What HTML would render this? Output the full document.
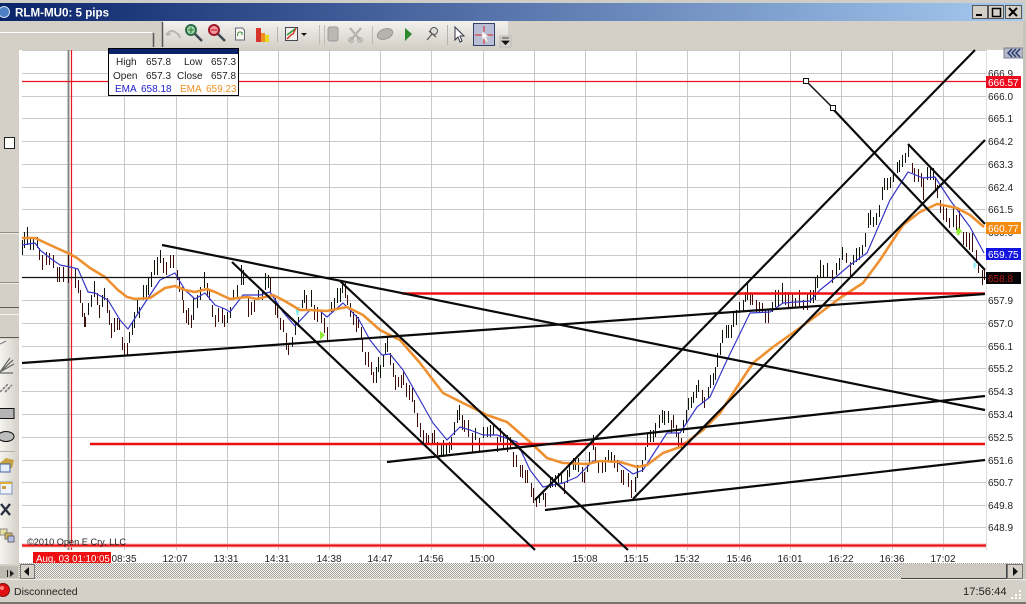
<!DOCTYPE html>
<html><head><meta charset="utf-8"><title>RLM-MU0: 5 pips</title>
<style>
html,body{margin:0;padding:0;background:#d4d0c8;width:1026px;height:604px;overflow:hidden}
svg{display:block;font-family:"Liberation Sans",sans-serif}
.g{stroke:#c9c9c9;stroke-width:1;fill:none}
.u{stroke:#0c140a;stroke-width:1;fill:none;shape-rendering:crispEdges}
.d{stroke:#3c0c08;stroke-width:1;fill:none;shape-rendering:crispEdges}
.t{stroke:#0a0a0a;stroke-width:2.2;fill:none}
.r{stroke:#ee1010;stroke-width:2.5;fill:none}
.a{font-size:10px;fill:#222}
.x{font-size:10px;fill:#222;text-anchor:middle}
.i{font-size:10px;fill:#222}
</style></head><body>
<svg width="1026" height="604" viewBox="0 0 1026 604">
<defs>
<linearGradient id="tb" x1="0" x2="1" y1="0" y2="0"><stop offset="0" stop-color="#0a246a"/><stop offset="1" stop-color="#a6caf0"/></linearGradient>
<linearGradient id="lp" x1="0" x2="1" y1="0" y2="0"><stop offset="0" stop-color="#f4f3ee"/><stop offset="1" stop-color="#d4d0c8"/></linearGradient>
<linearGradient id="tg" x1="0" x2="0" y1="0" y2="1"><stop offset="0" stop-color="#f3f2ee"/><stop offset="1" stop-color="#d4d0c8"/></linearGradient>
<pattern id="ht" width="2" height="2" patternUnits="userSpaceOnUse"><rect width="2" height="2" fill="#f4f4f0"/><rect width="1" height="1" fill="#a5a29b"/><rect x="1" y="1" width="1" height="1" fill="#a5a29b"/></pattern>
</defs>
<rect width="1026" height="604" fill="#d4d0c8"/>
<rect y="0" width="1026" height="3" fill="#cfcdc8"/>
<rect y="3" width="1026" height="18" fill="url(#tb)"/>
<circle cx="4" cy="12" r="5.5" fill="#4d7fc4" stroke="#cfe0f5"/>
<text x="15" y="16.5" font-size="11.6" font-weight="bold" fill="#fff">RLM-MU0: 5 pips</text>
<!-- window buttons -->
<g fill="#d4d0c8" stroke="#555" stroke-width="1">
<rect x="972.5" y="5.5" width="15" height="13"/><rect x="988.5" y="5.5" width="15" height="13"/><rect x="1005.5" y="5.5" width="16" height="13"/></g>
<path d="M976 15h6" stroke="#000" stroke-width="2"/>
<rect x="992.5" y="8.5" width="8" height="8" fill="none" stroke="#000" stroke-width="1.5"/>
<path d="M1009 8l8 8M1017 8l-8 8" stroke="#000" stroke-width="2"/>
<!-- toolbar -->
<rect y="21" width="1026" height="29" fill="#d4d0c8"/>
<rect x="163" y="21" width="345" height="27" fill="url(#tg)"/>
<path d="M0 32.5H152" stroke="#fff"/>
<path d="M153.5 33V47" stroke="#555" stroke-width="1.5"/>
<path d="M162.5 22V47" stroke="#555" stroke-width="1.5"/>
<!-- icons -->
<path d="M166 35q4-6 9-3t5 6M166 35l5-1" stroke="#b9b7b0" stroke-width="2" fill="none"/>
<circle cx="191" cy="30" r="5" fill="#9fd6a8" stroke="#2f6c4a" stroke-width="2"/><path d="M188 30h6M191 27v6" stroke="#2b7a3c"/><path d="M195 34l7 7" stroke="#3f4a52" stroke-width="2.6"/>
<circle cx="214" cy="30" r="5" fill="#f09aa0" stroke="#a01828" stroke-width="2"/><path d="M211 30h6" stroke="#c01020"/><path d="M218 34l7 7" stroke="#3f4a52" stroke-width="2.6"/>
<path d="M235.500 28h7l2 2v10h-9z" fill="#f6f6f0" stroke="#667"/><path d="M238 36a2.500 2.500 0 0 1 4-3M242 32v3" stroke="#3a8a3a" fill="none"/>
<rect x="256" y="28" width="5" height="14" fill="#d8352a"/><rect x="261" y="33" width="4" height="9" fill="#f09020"/><rect x="265" y="35" width="4" height="7" fill="#e8d820"/>
<path d="M277.500 27V42" stroke="#b5b2aa"/>
<rect x="285.500" y="27.500" width="12" height="13" fill="#f0f0ea" stroke="#445"/><path d="M287 39l4-4 2-1 3-6" stroke="#d8352a" stroke-width="1.500" fill="none"/><path d="M287 35l4-3 4-3" stroke="#2f9a3a" stroke-width="1.500" fill="none"/>
<path d="M301 33h6l-3 3z" fill="#111"/>
<path d="M319.500 25V45M324.500 25V45" stroke="#c0bdb5"/>
<rect x="328" y="27" width="10" height="14" rx="2" fill="#bbb8b2" stroke="#999"/>
<path d="M350 28l11 13M361 28l-11 13" stroke="#b5b2ac" stroke-width="2.200"/><circle cx="351" cy="40" r="2.500" fill="none" stroke="#aaa"/><circle cx="360" cy="40" r="2.500" fill="none" stroke="#aaa"/>
<path d="M372.500 26V44" stroke="#bdbab2"/>
<ellipse cx="385" cy="34" rx="8" ry="5" transform="rotate(-20 385 34)" fill="#b5b3ad" stroke="#999"/>
<path d="M405 28l7 6-7 7z" fill="#2c8a2c"/>
<circle cx="434" cy="31" r="3.500" fill="#ddd" stroke="#555"/><path d="M432 34l-5 6M429 31l7 6" stroke="#555" stroke-width="1.200"/>
<path d="M447.500 25V45" stroke="#b5b2aa"/>
<path d="M455 27l0 13 3-3 2 5 2-1-2-5 4 0z" fill="#fff" stroke="#334"/>
<rect x="473.500" y="23.500" width="21" height="22" fill="#b9bdd6" stroke="#33406a"/>
<path d="M484 26v7M484 38v6M475 35h7M487 35h6" stroke="#e02020"/><path d="M482 31l0 9 2-2 2 4 2-1-2-4h3z" fill="#fff" stroke="#ccc"/>
<rect x="500" y="36" width="11" height="11" fill="#d4d0c8" stroke="#bbb"/><path d="M502 38h7M502 41h7l-3.500 3.500z" fill="#111" stroke="#111" stroke-width=".8"/>

<!-- left panel -->
<rect x="0" y="50" width="19" height="528" fill="#d4d0c8"/>
<path d="M0 233.500H19M0 283.500H19" stroke="#eeece6"/><path d="M0 232.500H19M0 282.500H19" stroke="#8e8c85"/>
<path d="M0 307.500H19M0 337.500H19" stroke="#5f5d58"/><path d="M0 314.500H19" stroke="#f4f3ee"/>
<rect x="0" y="339" width="19" height="225" fill="url(#lp)"/>
<rect x="4.500" y="137.500" width="10" height="11" fill="#fff" stroke="#222"/>
<path d="M0 344l6-3" stroke="#777"/>
<path d="M0 372L13 360M0 372L10 358M0 372L14 364M0 373H13" stroke="#666" stroke-width="1.200"/>
<path d="M0 392l8-8M5 392l7-7" stroke="#777" stroke-width="1.500" stroke-dasharray="3 1"/>
<rect x="-2" y="408.500" width="16" height="10" fill="#b4b4b4" stroke="#111"/>
<ellipse cx="6" cy="436.500" rx="8" ry="5" fill="#bdbdbd" stroke="#111"/>
<path d="M0 451.500H15" stroke="#b5b2aa"/>
<path d="M0 463l6-5 8 2-2 8H0z" fill="#c8a040"/><rect x="0" y="464" width="10" height="8" fill="#e6eefa" stroke="#4060a0"/>
<rect x="0" y="482" width="12" height="12" fill="#eef3fb" stroke="#7a95bd"/><rect x="0" y="482" width="12" height="2" fill="#e0b030"/><rect x="2" y="486" width="4" height="3" fill="#d0a040"/>
<path d="M1 504l9 11M10 504l-9 11" stroke="#2a3040" stroke-width="2.300"/>
<rect x="0" y="529" width="7" height="6" fill="#e8e0a0" stroke="#888"/><rect x="5" y="533" width="7" height="6" fill="#d0b050" stroke="#776"/><rect x="8" y="536" width="6" height="6" fill="#b8c0e0" stroke="#667"/>
<rect x="0" y="566" width="18" height="12" fill="#bdbab2"/><path d="M7.500 570v7" stroke="#222"/><path d="M10 570l4 3.500-4 3.500z" fill="#222"/>

<!-- chart -->
<rect x="19" y="50" width="1004" height="513" fill="#fff"/>
<path class="g" d="M124.500 50V550M176.500 50V550M227.500 50V550M278.500 50V550M329.500 50V550M380.500 50V550M431.500 50V550M483.500 50V550M534.500 50V550M585.500 50V550M636.500 50V550M687.500 50V550M739.500 50V550M790.500 50V550M841.500 50V550M892.500 50V550M943.500 50V550"/>
<path class="g" d="M22 50.500H986M22 73.500H986M22 96.500H986M22 118.500H986M22 141.500H986M22 164.500H986M22 187.500H986M22 209.500H986M22 232.500H986M22 255.500H986M22 277.500H986M22 300.500H986M22 323.500H986M22 346.500H986M22 368.500H986M22 391.500H986M22 414.500H986M22 437.500H986M22 460.500H986M22 482.500H986M22 505.500H986M22 527.500H986"/>
<path d="M986.500 50V550" stroke="#ddd"/>
<path d="M68.500 50V550" stroke="#8b8880" stroke-width="2"/>

<!-- bars -->
<g transform="translate(.5 0)">
<path class="u" d="M22 240V255M24 232V248M27 227V245M30 237V250M33 237V250M37 237V248"/>
<path class="d" d="M39 248V260M42 255V270M46 252V265M49 253V265M53 255V268M57 267V282M59 267V282M63 267V282M68 255V283M71 263V280M75 268V288M78 280V293M80 290V303M82 303V317M84 313V327M85 317V327"/>
<path class="u" d="M88 303V315M91 295V307M94 281V297"/>
<path class="d" d="M97 293V305M99 305V318"/>
<path class="u" d="M102 295V307M104 288V300"/>
<path class="d" d="M107 298V313M109 310V325M111 323V338M114 318V332M117 318V330M119 318V330M122 337V350M124 343V355M127 343V355"/>
<path class="u" d="M129 332V343M132 322V335M134 312V328M137 299V313M139 307V318M143 285V300M146 285V298M148 277V295M151 272V287M154 260V275M157 257V275M160 250V263"/>
<path class="d" d="M163 258V273M166 262V275M170 255V268M173 255V268M177 270V280M179 277V292M182 287V300M183 300V313M186 310V323M188 308V325M191 315V328"/>
<path class="u" d="M193 298V320M197 295V308M200 287V300M204 272V288"/>
<path class="d" d="M207 283V297M209 290V300M212 305V317M215 315V327M218 308V322M222 308V323M224 315V327"/>
<path class="u" d="M227 312V323M230 307V318M233 290V300M237 285V297M241 265V285M243 270V285"/>
<path class="d" d="M248 298V317M251 302V315M254 300V312"/>
<path class="u" d="M258 290V300M262 292V300M265 273V290M268 275V288"/>
<path class="d" d="M270 277V292M275 298V315M277 307V318M280 318V330M283 320V332M286 333V350M288 343V355"/>
<path class="u" d="M292 337V347M295 323V335M298 317V327M302 300V308M304 290V303"/>
<path class="d" d="M306 295V310"/>
<path class="u" d="M311 290V307"/>
<path class="d" d="M314 305V320M317 307V322M321 310V323M324 318V333M327 327V340"/>
<path class="u" d="M331 302V312M334 298V310M337 288V303M340 288V302M342 282V293"/>
<path class="d" d="M345 283V298M347 295V305M350 303V317M353 312V325M356 315V332M358 317V328M361 327V340M362 338V352M365 352V365M368 352V367M371 362V375M373 372V383"/>
<path class="u" d="M376 367V383M378 357V372M380 365V378M383 355V367M385 343V355M387 337V352"/>
<path class="d" d="M390 353V365M393 363V377M395 375V390M398 377V387M401 375V388M403 372V385M406 383V397M409 385V400M412 388V402M414 400V413M417 413V427M420 423V437M423 430V443M426 433V445M428 435V445M432 433V445M434 430V443M437 442V455"/>
<path class="u" d="M441 445V455M443 440V455M446 445V455M449 442V453M451 437V450M454 422V435M457 410V423M459 405V420"/>
<path class="d" d="M462 415V430M464 420V432M468 420V437M472 433V452"/>
<path class="u" d="M475 428V440"/>
<path class="d" d="M479 438V452"/>
<path class="u" d="M483 427V438M487 427V437M490 425V437M493 423V435"/>
<path class="d" d="M497 437V452M500 428V442M503 435V448M507 435V452M510 437V448M513 452V467M516 455V467M520 465V477M522 465V478M525 470V483M527 470V483M531 483V497M533 488V503M536 497V507M545 493V507"/>
<path class="u" d="M539 495V503M543 493V500M550 478V488M552 477V487M555 475V487M558 473V483M561 473V483"/>
<path class="d" d="M564 482V494"/>
<path class="u" d="M567 470V483M569 465V477M573 458V470M575 458V470M578 458V472"/>
<path class="d" d="M582 467V482M584 472V483"/>
<path class="u" d="M587 463V472M589 452V465M593 435V450"/>
<path class="d" d="M595 447V463M598 462V473M602 460V473"/>
<path class="u" d="M605 457V472M608 450V462M611 452V463"/>
<path class="d" d="M614 455V468M617 460V472M621 470V483M623 470V485M628 473V487M631 480V498"/>
<path class="u" d="M635 477V492M637 465V478M642 460V472M645 447V460M647 433V447M650 430V442M653 430V442M655 423V437M659 415V428M662 410V423M664 411V425M668 411V423"/>
<path class="d" d="M671 420V433M673 415V428M676 425V437M678 433V447M681 438V450"/>
<path class="u" d="M683 420V433M686 410V423M688 398V410M691 397V408M693 392V403M696 385V398M698 380V392"/>
<path class="d" d="M702 390V403M704 397V408"/>
<path class="u" d="M708 387V398M710 375V388M713 373V385M715 367V380M717 353V367M720 343V355M722 330V343M726 325V338M728 325V338M731 325V338M733 313V327M736 310V325M739 302V313M743 300V312M745 292V302M747 283V300"/>
<path class="d" d="M750 293V305M752 293V305M756 300V312M759 302V313M762 303V313M765 310V323M768 310V323"/>
<path class="u" d="M772 302V312M775 290V307M778 290V307M782 283V303"/>
<path class="d" d="M785 292V305M788 292V307M792 293V307M795 298V308M799 290V308M803 300V310M807 293V310"/>
<path class="u" d="M810 290V303M813 290V303M815 277V300M817 275V288M820 260V277M823 265V278M827 263V277"/>
<path class="d" d="M832 270V283"/>
<path class="u" d="M836 263V275M839 258V270M842 247V260"/>
<path class="d" d="M846 253V263M850 262V277"/>
<path class="u" d="M853 255V265M856 248V262M859 247V260M862 245V255M865 233V247M868 213V228M870 210V225M873 217V227M876 213V225M879 205V217M882 187V200M884 178V190M887 178V190M890 177V188M893 173V182M897 162V173M899 160V172M902 155V167M905 153V163M908 145V157"/>
<path class="d" d="M912 163V173M914 168V182M918 169V182M921 173V187M923 178V200"/>
<path class="u" d="M927 167V180M930 167V180M933 168V180"/>
<path class="d" d="M935 177V190M937 185V198M940 200V213M943 205V220M946 208V222M949 218V228"/>
<path class="u" d="M953 208V227"/>
<path class="d" d="M956 215V230M959 210V230M963 232V245M966 232V247M969 233V250M972 233V252M976 250V263M978 262V273M982 270V285M984 270V280"/>
</g>
<!-- markers -->
<path d="M295 307l5 0-2.500 10z" fill="#70f0f0"/><path d="M320 331l5 4-5 5z" fill="#90ee30"/>
<path d="M958 227l4 4-4 5-2-4z" fill="#90ee30"/><path d="M974 261l3 4-3 5-1-5z" fill="#a0f0f8"/>

<path d="M71.500 50V550" stroke="#e8141e" stroke-width="1.200"/>
<path d="M22 81.500H986" stroke="#e8141e" stroke-width="1.200"/>

<!-- EMA -->
<polyline fill="none" stroke="#3636c8" stroke-width="1.200" stroke-linejoin="round" points="22,245 35,243 40,250 50,258 60,265 70,267 78,269 88,292 95,293 108,300 120,320 128,329 137,315 150,295 160,280 175,273 185,290 195,299 205,293 215,305 225,309 230,312 243,295 260,295 270,292 283,312 295,326 310,310 320,311 327,317 343,303 358,318 370,340 382,355 390,354 403,370 420,400 433,423 447,440 460,427 470,430 483,435 497,435 517,442 530,470 543,487 563,483 577,477 593,461 617,462 633,474 643,470 667,433 680,433 697,407 710,397 727,360 750,313 770,312 783,303 810,301 820,290 830,282 850,265 867,253 890,200 908,172 923,178 935,177 950,200 970,227 984,253"/>
<polyline fill="none" stroke="#ef9030" stroke-width="2.600" stroke-linejoin="round" points="22,238 35,238 50,245 70,254 77,258 90,268 105,277 118,290 127,297 135,299 150,298 165,288 175,286 185,290 195,292 207,289 215,292 230,299 247,297 257,299 273,295 283,300 300,310 310,310 327,311 347,307 363,315 380,330 400,340 420,363 443,393 463,403 487,415 507,422 530,442 547,458 563,463 587,464 600,461 620,462 637,467 647,465 663,453 680,447 703,430 720,413 737,387 753,363 773,347 797,330 820,313 840,298 863,283 880,260 903,225 920,212 937,204 957,208 970,215 984,227"/>

<!-- horizontal -->
<path d="M22 277.500H986" stroke="#111" stroke-width="1.200"/>
<path class="r" d="M402 293.500H985"/>
<path class="r" d="M90 444H985"/>
<path d="M22 545.500H986" stroke="#ee1010" stroke-width="2"/><path d="M22 544H986M22 547H986" stroke="#f4b0b0"/>

<!-- trend lines -->
<path class="t" d="M162 245L985 410M22 363L985 294M232 262L535 550M340 281L628 550M387 462L985 396M545 510L985 460M535 500L975 50M633 499L985 140M833 109L985 270M908 144L985 224"/>
<path d="M806 81L833 108" stroke="#111" stroke-width="1.500"/>
<rect x="803.500" y="78.500" width="5" height="5" fill="#fff" stroke="#111"/>
<rect x="830.500" y="105.500" width="5" height="5" fill="#fff" stroke="#111"/>

<text x="27" y="545" font-size="9.2" fill="#222">©2010 Open E Cry, LLC</text>

<!-- axis -->
<rect x="987" y="50" width="36" height="500" fill="#fff"/>
<text class="a" x="988" y="77">666.9</text><text class="a" x="988" y="100">666.0</text><text class="a" x="988" y="122">665.1</text><text class="a" x="988" y="145">664.2</text><text class="a" x="988" y="168">663.3</text><text class="a" x="988" y="191">662.4</text><text class="a" x="988" y="213">661.5</text><text class="a" x="988" y="236">660.6</text><text class="a" x="988" y="304">657.9</text><text class="a" x="988" y="327">657.0</text><text class="a" x="988" y="350">656.1</text><text class="a" x="988" y="372">655.2</text><text class="a" x="988" y="395">654.3</text><text class="a" x="988" y="418">653.4</text><text class="a" x="988" y="441">652.5</text><text class="a" x="988" y="464">651.6</text><text class="a" x="988" y="486">650.7</text><text class="a" x="988" y="509">649.8</text><text class="a" x="988" y="531">648.9</text>
<rect x="986" y="76" width="35" height="12" fill="#ee0a1e"/><text x="988" y="86" font-size="10" fill="#fff">666.57</text>
<rect x="986" y="222" width="35" height="12" fill="#f58a10"/><text x="988" y="232" font-size="10" fill="#fff">660.77</text>
<rect x="986" y="248" width="35" height="12" fill="#1414e0"/><text x="988" y="258" font-size="10" fill="#fff">659.75</text>
<rect x="986" y="272" width="35" height="12" fill="#060606"/><text x="988" y="282" font-size="10" fill="#b01818">658.8</text>
<rect x="1004" y="48" width="19" height="10" fill="#b4bac8" stroke="#7a8090"/>
<path d="M1012 49l-4 4 4 4M1016 49l-4 4 4 4M1020 49l-4 4 4 4" stroke="#2a3a70" fill="none" stroke-width="1.500"/>

<!-- info box -->
<rect x="108.500" y="48.500" width="130" height="47" fill="#fff" stroke="#000"/>
<rect x="109" y="49" width="129" height="5" fill="#0a246a"/>
<text class="i" x="116" y="65">High</text><text class="i" x="146" y="65">657.8</text><text class="i" x="184" y="65">Low</text><text class="i" x="211" y="65">657.3</text>
<text class="i" x="113" y="79">Open</text><text class="i" x="146" y="79">657.3</text><text class="i" x="177" y="79">Close</text><text class="i" x="211" y="79">657.8</text>
<text x="115" y="92" font-size="10" fill="#2020d0">EMA</text><text x="141" y="92" font-size="10" fill="#2020d0">658.18</text><text x="180" y="92" font-size="10" fill="#f09020">EMA</text><text x="206" y="92" font-size="10" fill="#f09020">659.23</text>

<!-- time axis -->
<rect x="33" y="552" width="78" height="11" fill="#ee1010"/>
<text x="36" y="562" font-size="9.700" fill="#fff">Aug, 03 01:10:05</text>
<text class="x" x="124" y="562">08:35</text><text class="x" x="175" y="562">12:07</text><text class="x" x="226" y="562">13:31</text><text class="x" x="277" y="562">14:31</text><text class="x" x="329" y="562">14:38</text><text class="x" x="380" y="562">14:47</text><text class="x" x="431" y="562">14:56</text><text class="x" x="482" y="562">15:00</text><text class="x" x="585" y="562">15:08</text><text class="x" x="636" y="562">15:15</text><text class="x" x="687" y="562">15:32</text><text class="x" x="739" y="562">15:46</text><text class="x" x="790" y="562">16:01</text><text class="x" x="841" y="562">16:22</text><text class="x" x="892" y="562">16:36</text><text class="x" x="943" y="562">17:02</text>

<!-- scrollbar -->
<rect x="19" y="563" width="1004" height="15" fill="url(#ht)"/>
<rect x="20.500" y="564.500" width="14" height="14" fill="#d4d0c8" stroke="#777"/>
<path d="M29 567l-5 4.500 5 4.500z" fill="#111"/>
<rect x="901" y="564" width="106" height="14" fill="#cdc9c1"/><path d="M901 578.500H1007M1006.500 564V578" stroke="#444"/>
<rect x="1007.500" y="564.500" width="15" height="14" fill="#d4d0c8" stroke="#777"/>
<path d="M1013 567l5 4.500-5 4.500z" fill="#111"/>
<rect x="1023" y="0" width="3" height="604" fill="#cfcdc8"/>
<rect x="1023" y="21" width="3" height="558" fill="#c8c5bd"/>

<!-- status -->
<rect y="579" width="1026" height="25" fill="#d4d0c8"/>
<path d="M0 579.500H1026" stroke="#eeece6"/>
<path d="M0 603H1026" stroke="#77756f" stroke-width="2"/>
<circle cx="3" cy="590" r="6.500" fill="#e01010" stroke="#801010"/><circle cx="2" cy="588" r="2" fill="#ff8a80"/>
<text x="14" y="595" font-size="10.500" fill="#222">Disconnected</text>
<text x="963" y="595" font-size="11.200" fill="#222">17:56:44</text>
<g fill="#fff"><rect x="1019" y="590" width="2" height="2"/><rect x="1015" y="594" width="2" height="2"/><rect x="1019" y="594" width="2" height="2"/><rect x="1011" y="597" width="2" height="2"/><rect x="1015" y="597" width="2" height="2"/><rect x="1019" y="597" width="2" height="2"/></g>
</svg>
</body></html>
